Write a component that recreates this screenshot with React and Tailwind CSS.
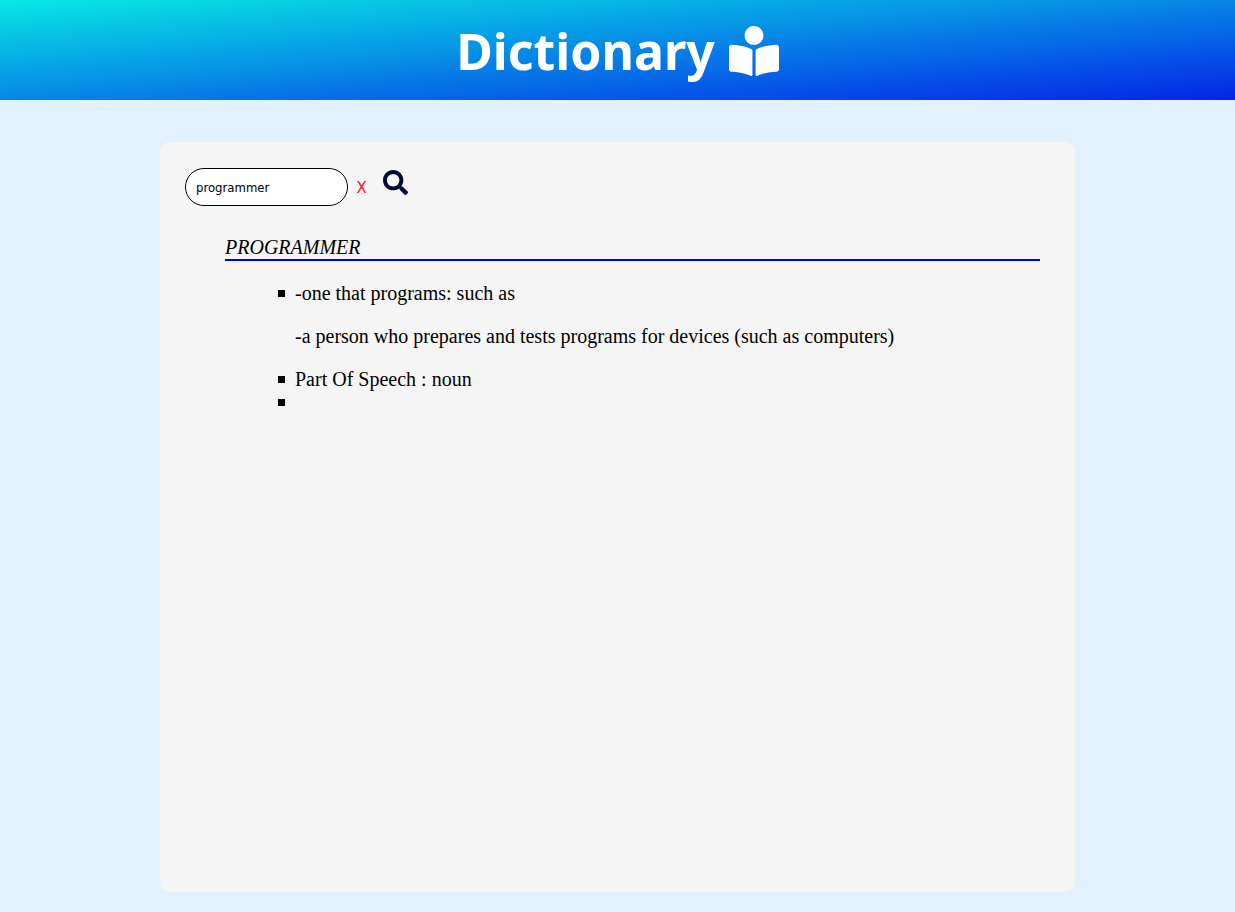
import { useState } from "react";
import { FaBookReader, FaSearch } from "react-icons/fa";

const entry = {
  word: "PROGRAMMER",
  definitions: [
    "-one that programs: such as",
    "-a person who prepares and tests programs for devices (such as computers)",
  ],
  partOfSpeech: "noun",
};

function Header() {
  return (
    <header className="flex h-[100px] items-center justify-center gap-[14px] bg-[linear-gradient(to_bottom_right,#08e8e4,#0524e8)] pt-0.5 text-white">
      <h1 className="font-['Noto_Sans',sans-serif] text-[50px] leading-[60px] font-bold">
        Dictionary
      </h1>
      <FaBookReader className="size-[50px]" aria-hidden="true" />
    </header>
  );
}

function SearchBar() {
  const [query, setQuery] = useState("programmer");
  return (
    <form
      className="flex items-center font-['Noto_Sans',sans-serif]"
      onSubmit={(event) => event.preventDefault()}
    >
      <input
        type="text"
        aria-label="Word"
        value={query}
        onChange={(event) => setQuery(event.target.value)}
        className="h-[38px] w-[163px] rounded-[20px] border border-black bg-white px-2.5 font-['DejaVu_Sans_Condensed','Noto_Sans',sans-serif] text-[13px] text-black"
      />
      <button
        type="button"
        aria-label="Clear"
        onClick={() => setQuery("")}
        className="ml-[9px] text-base leading-5 text-[#ff0010]"
      >
        X
      </button>
      <button type="submit" aria-label="Search" className="mb-2.5 ml-[17px] text-[#00093c]">
        <FaSearch className="size-[25px]" aria-hidden="true" />
      </button>
    </form>
  );
}

function ListItem({ children }) {
  return (
    <li className="flex min-h-[23px] gap-2.5 before:mt-2 before:size-[7px] before:shrink-0 before:bg-black">
      <div>{children}</div>
    </li>
  );
}

function Definition() {
  return (
    <section className="mt-[30px] mr-2.5 ml-10 font-['Liberation_Serif',serif] text-xl leading-[23px] text-black">
      <h2 className="border-b-2 border-[#0000e6] italic">{entry.word}</h2>
      <ul className="mt-[21px] pl-[53px]">
        <ListItem>
          {entry.definitions.map((text) => (
            <p key={text} className="mb-5">
              {text}
            </p>
          ))}
        </ListItem>
        <ListItem>Part Of Speech : {entry.partOfSpeech}</ListItem>
        <ListItem />
      </ul>
    </section>
  );
}

export default function App() {
  return (
    <div className="flex min-h-screen flex-col bg-[#e3f1ff]">
      <Header />
      <main className="mx-40 mt-[42px] mb-5 flex-1 rounded-[10px] bg-[#f5f5f5] px-[25px] pt-[26px] pb-[25px]">
        <SearchBar />
        <Definition />
      </main>
    </div>
  );
}
